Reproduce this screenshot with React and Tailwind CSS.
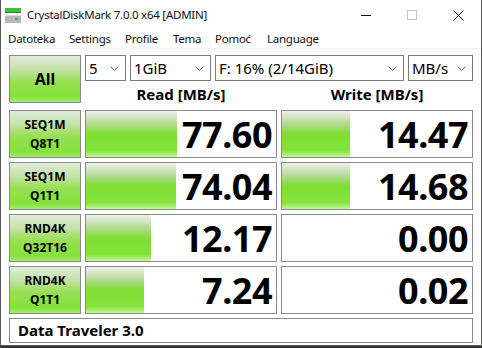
import React from 'react';

const rows = [
  { l1: 'SEQ1M', l2: 'Q8T1', read: '77.60', readBar: 91, write: '14.47', writeBar: 68 },
  { l1: 'SEQ1M', l2: 'Q1T1', read: '74.04', readBar: 90, write: '14.68', writeBar: 68 },
  { l1: 'RND4K', l2: 'Q32T16', read: '12.17', readBar: 65, write: '0.00', writeBar: 0 },
  { l1: 'RND4K', l2: 'Q1T1', read: '7.24', readBar: 58, write: '0.02', writeBar: 0 },
];

const menu = [
  { name: 'Datoteka', w: 'w-[61px]' },
  { name: 'Settings', w: 'w-[56px]' },
  { name: 'Profile', w: 'w-[48px]' },
  { name: 'Tema', w: 'w-[42px]' },
  { name: 'Pomoć', w: 'w-[52px]' },
  { name: 'Language', w: 'w-[70px]' },
];

const btnGrad =
  'bg-[linear-gradient(to_bottom,#e2eadb_0%,#c2e2a6_30%,#98e052_55%,#84e23a_88%,#a4ea6c_100%)]';
const barGrad =
  'bg-[linear-gradient(to_bottom,#eef0ec_0%,#b2da92_28%,#7fde30_50%,#84e43a_86%,#c8f5a0_100%)]';

const Chevron = () => (
  <svg width="9" height="5" viewBox="0 0 9 5" className="shrink-0">
    <path d="M0.5 0.5 L4.5 4.5 L8.5 0.5" fill="none" stroke="#6a6a6a" strokeWidth="1" />
  </svg>
);

const Select = ({ value, className }) => (
  <div
    className={`h-[26px] border border-[#7a7a7a] bg-white flex items-center justify-between pl-[3px] pr-[6px] text-[15px] leading-none ${className}`}
  >
    <span>{value}</span>
    <Chevron />
  </div>
);

const Cell = ({ value, bar }) => (
  <div className="relative h-[48px] border border-[#8a8a8a] bg-white flex items-center justify-end">
    {bar > 0 && (
      <div className={`absolute left-0 top-0 bottom-0 ${barGrad}`} style={{ width: bar }} />
    )}
    <span className="relative pr-[4px] pt-[3px] text-[36px] font-bold leading-none tracking-[-0.5px]">
      {value}
    </span>
  </div>
);

export default function App() {
  return (
    <div className="h-[348px] w-[482px] bg-[#3b342e] font-['Noto_Sans',sans-serif] text-black">
      <div className="h-[346px] w-[482px] bg-white border-x border-b border-[#5a5a5a] flex flex-col">
        {/* title bar */}
        <div className="h-[30px] flex items-center">
          <svg width="17" height="17" viewBox="0 0 17 17" className="ml-[3px] mr-[6px]">
            <rect x="1" y="1" width="16" height="5" fill="#3cc03c" />
            <rect x="1" y="5" width="16" height="1" fill="#2a8a2a" />
            <rect x="1" y="8" width="16" height="8" fill="#b8b8b8" />
            <rect x="1" y="8" width="16" height="1" fill="#d8d8d8" />
            <rect x="11" y="11" width="3" height="2" fill="#3cc03c" />
          </svg>
          <span className="text-[11.5px] tracking-[-0.25px] text-[#111]">CrystalDiskMark 7.0.0 x64 [ADMIN]</span>
          <div className="ml-auto flex h-full">
            <div className="w-[46px] flex items-center justify-center">
              <div className="w-[10px] h-px bg-[#111]" />
            </div>
            <div className="w-[46px] flex items-center justify-center">
              <div className="w-[10px] h-[10px] border border-[#c4c4c4]" />
            </div>
            <div className="w-[46px] flex items-center justify-center">
              <svg width="11" height="11" viewBox="0 0 11 11">
                <path d="M0.5 0.5 L10.5 10.5 M10.5 0.5 L0.5 10.5" stroke="#111" strokeWidth="1" />
              </svg>
            </div>
          </div>
        </div>

        {/* menu */}
        <div className="h-[19px] flex items-center pl-[7px] text-[11.5px] tracking-[-0.25px] text-[#111] border-b border-[#f0f0f0]">
          {menu.map((m) => (
            <span key={m.name} className={m.w}>
              {m.name}
            </span>
          ))}
        </div>

        {/* main grid */}
        <div className="px-[8px] pt-[6px] flex flex-col gap-[4px]">
          <div className="flex gap-[4px]">
            <div
              className={`w-[72px] h-[48px] shrink-0 border border-[#8a8a8a] flex items-center justify-center text-[16px] font-bold ${btnGrad}`}
            >
              All
            </div>
            <div className="flex-1 flex flex-col">
              <div className="flex gap-[4px]">
                <Select value="5" className="w-[41px]" />
                <Select value="1GiB" className="w-[81px]" />
                <Select value="F: 16% (2/14GiB)" className="w-[189px]" />
                <Select value="MB/s" className="flex-1" />
              </div>
              <div className="grid grid-cols-2 gap-[4px] flex-1 text-[15px] font-bold">
                <div className="flex items-center justify-center pt-[2px]">Read [MB/s]</div>
                <div className="flex items-center justify-center pt-[2px]">Write [MB/s]</div>
              </div>
            </div>
          </div>

          {rows.map((r, i) => (
            <div key={i} className="grid grid-cols-[72px_1fr_1fr] gap-[4px]">
              <div
                className={`h-[48px] border border-[#8a8a8a] flex flex-col items-center justify-center text-[12px] font-bold leading-[19px] ${btnGrad}`}
              >
                <span>{r.l1}</span>
                <span>{r.l2}</span>
              </div>
              <Cell value={r.read} bar={r.readBar} />
              <Cell value={r.write} bar={r.writeBar} />
            </div>
          ))}

          <div className="h-[25px] border border-[#8a8a8a] flex items-center pl-[8px] text-[15px] font-bold">
            Data Traveler 3.0
          </div>
        </div>
      </div>
    </div>
  );
}
